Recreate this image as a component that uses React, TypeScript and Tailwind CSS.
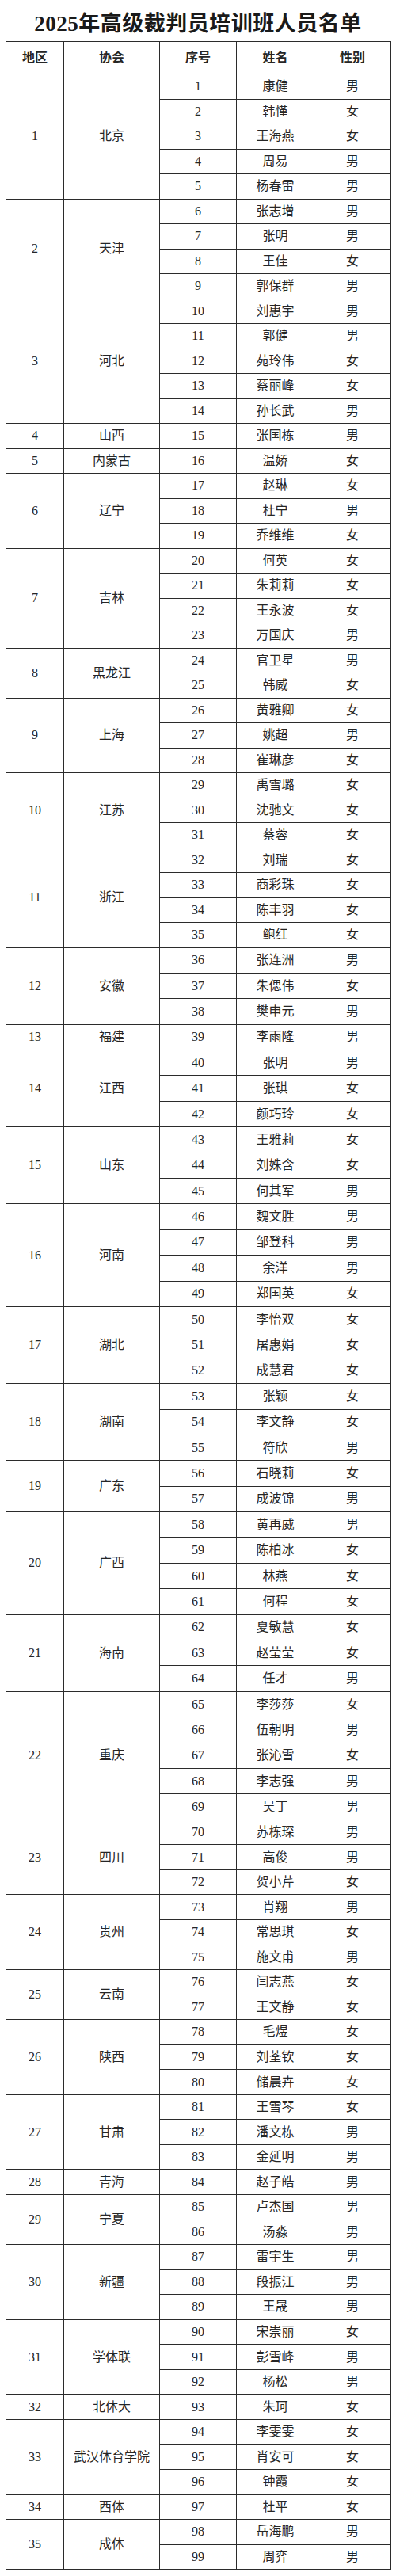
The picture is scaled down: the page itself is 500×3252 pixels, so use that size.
import React from "react"

type Group = { area: number; assoc: string; people: [string, string][] }

const groups: Group[] = [
    { area: 1, assoc: "北京", people: [["康健", "男"], ["韩慬", "女"], ["王海燕", "女"], ["周易", "男"], ["杨春雷", "男"]] },
    { area: 2, assoc: "天津", people: [["张志增", "男"], ["张明", "男"], ["王佳", "女"], ["郭保群", "男"]] },
    { area: 3, assoc: "河北", people: [["刘惠宇", "男"], ["郭健", "男"], ["苑玲伟", "女"], ["蔡丽峰", "女"], ["孙长武", "男"]] },
    { area: 4, assoc: "山西", people: [["张国栋", "男"]] },
    { area: 5, assoc: "内蒙古", people: [["温娇", "女"]] },
    { area: 6, assoc: "辽宁", people: [["赵琳", "女"], ["杜宁", "男"], ["乔维维", "女"]] },
    { area: 7, assoc: "吉林", people: [["何英", "女"], ["朱莉莉", "女"], ["王永波", "女"], ["万国庆", "男"]] },
    { area: 8, assoc: "黑龙江", people: [["官卫星", "男"], ["韩威", "女"]] },
    { area: 9, assoc: "上海", people: [["黄雅卿", "女"], ["姚超", "男"], ["崔琳彦", "女"]] },
    { area: 10, assoc: "江苏", people: [["禹雪璐", "女"], ["沈驰文", "女"], ["蔡蓉", "女"]] },
    { area: 11, assoc: "浙江", people: [["刘瑞", "女"], ["商彩珠", "女"], ["陈丰羽", "女"], ["鲍红", "女"]] },
    { area: 12, assoc: "安徽", people: [["张连洲", "男"], ["朱偲伟", "女"], ["樊申元", "男"]] },
    { area: 13, assoc: "福建", people: [["李雨隆", "男"]] },
    { area: 14, assoc: "江西", people: [["张明", "男"], ["张琪", "女"], ["颜巧玲", "女"]] },
    { area: 15, assoc: "山东", people: [["王雅莉", "女"], ["刘姝含", "女"], ["何其军", "男"]] },
    { area: 16, assoc: "河南", people: [["魏文胜", "男"], ["邹登科", "男"], ["余洋", "男"], ["郑国英", "女"]] },
    { area: 17, assoc: "湖北", people: [["李怡双", "女"], ["屠惠娟", "女"], ["成慧君", "女"]] },
    { area: 18, assoc: "湖南", people: [["张颖", "女"], ["李文静", "女"], ["符欣", "男"]] },
    { area: 19, assoc: "广东", people: [["石晓莉", "女"], ["成波锦", "男"]] },
    { area: 20, assoc: "广西", people: [["黄再威", "男"], ["陈柏冰", "女"], ["林燕", "女"], ["何程", "女"]] },
    { area: 21, assoc: "海南", people: [["夏敏慧", "女"], ["赵莹莹", "女"], ["任才", "男"]] },
    { area: 22, assoc: "重庆", people: [["李莎莎", "女"], ["伍朝明", "男"], ["张沁雪", "女"], ["李志强", "男"], ["吴丁", "男"]] },
    { area: 23, assoc: "四川", people: [["苏栋琛", "男"], ["高俊", "男"], ["贺小芹", "女"]] },
    { area: 24, assoc: "贵州", people: [["肖翔", "男"], ["常思琪", "女"], ["施文甫", "男"]] },
    { area: 25, assoc: "云南", people: [["闫志燕", "女"], ["王文静", "女"]] },
    { area: 26, assoc: "陕西", people: [["毛煜", "女"], ["刘荃钦", "女"], ["储晨卉", "女"]] },
    { area: 27, assoc: "甘肃", people: [["王雪琴", "女"], ["潘文栋", "男"], ["金延明", "男"]] },
    { area: 28, assoc: "青海", people: [["赵子皓", "男"]] },
    { area: 29, assoc: "宁夏", people: [["卢杰国", "男"], ["汤淼", "男"]] },
    { area: 30, assoc: "新疆", people: [["雷宇生", "男"], ["段振江", "男"], ["王晟", "男"]] },
    { area: 31, assoc: "学体联", people: [["宋崇丽", "女"], ["彭雪峰", "男"], ["杨松", "男"]] },
    { area: 32, assoc: "北体大", people: [["朱珂", "女"]] },
    { area: 33, assoc: "武汉体育学院", people: [["李雯雯", "女"], ["肖安可", "女"], ["钟霞", "女"]] },
    { area: 34, assoc: "西体", people: [["杜平", "女"]] },
    { area: 35, assoc: "成体", people: [["岳海鹏", "男"], ["周弈", "男"]] },
]

const cell = "border border-[#2b2b2b] text-center align-middle p-0"

export default function App() {
    let n = 0
    const rows: React.ReactNode[] = []
    groups.forEach((g) => {
        g.people.forEach(([name, sex], i) => {
            n += 1
            // the screenshot's rows are a bit taller in the middle stretch
            const h = n <= 35 ? "h-[31.5px]" : n <= 69 ? "h-[32.4px]" : "h-[31.55px]"
            rows.push(
                <tr key={n} className={h}>
                    {i === 0 && (
                        <>
                            <td rowSpan={g.people.length} className={cell}>{g.area}</td>
                            <td rowSpan={g.people.length} className={cell}>{g.assoc}</td>
                        </>
                    )}
                    <td className={cell}>{n}</td>
                    <td className={cell}>{name}</td>
                    <td className={cell}>{sex}</td>
                </tr>
            )
        })
    })

    return (
        <div
            className="bg-white w-[500px] h-[3252px] px-[7px] pt-[7px] text-[#262626]"
            style={{ fontFamily: '"Liberation Serif", "Noto Sans CJK SC", serif' }}
        >
            <div className="h-[45px] border border-b-0 border-[#ececec] flex items-center justify-center">
                <h1 className="text-[27px] font-bold text-[#1a1a1a] tracking-[0.5px] leading-none">2025年高级裁判员培训班人员名单</h1>
            </div>
            <table className="w-[486px] table-fixed border-collapse text-[16px] leading-none">
                <colgroup>
                    <col className="w-[73px]" />
                    <col className="w-[121px]" />
                    <col className="w-[97px]" />
                    <col className="w-[98px]" />
                    <col className="w-[97px]" />
                </colgroup>
                <thead>
                    <tr className="h-[41px] font-bold">
                        <th className={cell}>地区</th>
                        <th className={cell}>协会</th>
                        <th className={cell}>序号</th>
                        <th className={cell}>姓名</th>
                        <th className={cell}>性别</th>
                    </tr>
                </thead>
                <tbody>{rows}</tbody>
            </table>
        </div>
    )
}
